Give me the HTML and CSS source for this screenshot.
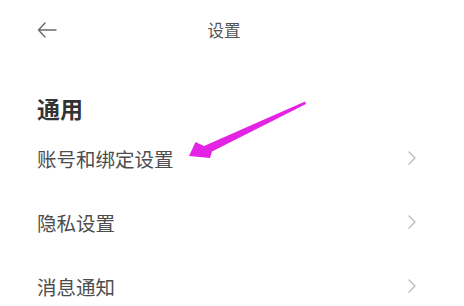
FILE: index.html
```html
<!DOCTYPE html>
<html lang="zh">
<head>
<meta charset="utf-8">
<link rel="stylesheet" href="styles.css">
</head>
<body>
<div class="page">
  <header class="topbar">
    <svg class="back" width="20" height="16" viewBox="0 0 20 16" fill="none" stroke="#6a6a6a" stroke-width="1.4" stroke-linecap="round" stroke-linejoin="round">
      <path d="M19 8H1.5M8 1L1.5 8L8 15"/>
    </svg>
    <div class="title">设置</div>
    <div></div>
  </header>
  <h2 class="section">通用</h2>
  <ul class="list">
    <li class="row"><span>账号和绑定设置</span><svg class="chev" width="8" height="14" viewBox="0 0 8 14" fill="none" stroke="#b8b8b8" stroke-width="1.3" stroke-linecap="round" stroke-linejoin="round"><path d="M1 1l6 6-6 6"/></svg></li>
    <li class="row"><span>隐私设置</span><svg class="chev" width="8" height="14" viewBox="0 0 8 14" fill="none" stroke="#b8b8b8" stroke-width="1.3" stroke-linecap="round" stroke-linejoin="round"><path d="M1 1l6 6-6 6"/></svg></li>
    <li class="row"><span>消息通知</span><svg class="chev" width="8" height="14" viewBox="0 0 8 14" fill="none" stroke="#b8b8b8" stroke-width="1.3" stroke-linecap="round" stroke-linejoin="round"><path d="M1 1l6 6-6 6"/></svg></li>
  </ul>
  <svg class="annot" width="464" height="306" viewBox="0 0 464 306">
    <polygon points="305,101.5 204,146 195.5,142 189,156 210,158 212,151.5 306,104" fill="#e424e4"/>
  </svg>
</div>
</body>
</html>
```
FILE: styles.css
```css
html, body {
  margin: 0;
  padding: 0;
  background: #ffffff;
}
.page {
  position: relative;
  width: 464px;
  height: 306px;
  overflow: hidden;
  font-family: "Noto Sans CJK SC", "Noto Sans", sans-serif;
}
.topbar {
  height: 60px;
  display: grid;
  grid-template-columns: 1fr auto 1fr;
  align-items: center;
  padding: 0 53px 0 37px;
}
.back {
  display: block;
}
.title {
  font-size: 16.5px;
  color: #555;
  line-height: 20px;
}
.section {
  margin: 32px 0 0;
  padding-left: 37px;
  font-size: 23px;
  line-height: 32px;
  font-weight: 700;
  color: #333;
}
.list {
  list-style: none;
  margin: 2px 0 0;
  padding: 0;
}
.row {
  height: 64px;
  display: flex;
  align-items: center;
  justify-content: space-between;
  padding: 0 48px 0 37px;
  font-size: 19.5px;
  color: #4d4d4d;
}
.chev {
  display: block;
}
.annot {
  position: absolute;
  left: 0;
  top: 0;
  pointer-events: none;
}
```
